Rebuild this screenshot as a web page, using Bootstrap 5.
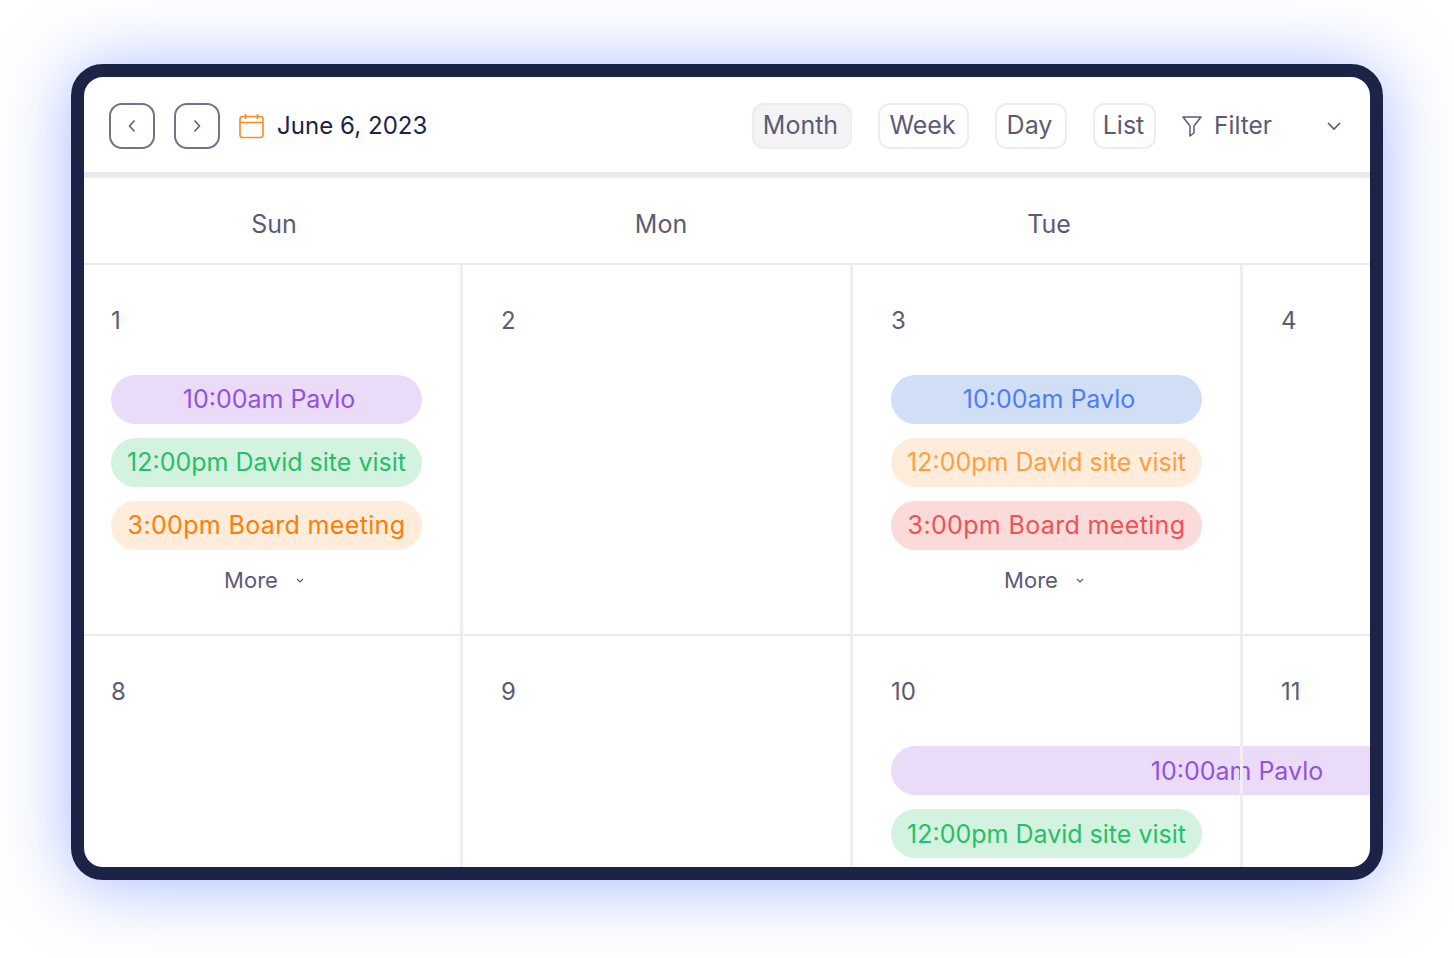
<!DOCTYPE html>
<html lang="en">
<head>
  <meta charset="UTF-8" />
  <title>Calendar</title>
  <link href="https://cdn.jsdelivr.net/npm/bootstrap@5.3.0/dist/css/bootstrap.min.css" rel="stylesheet" />
  <style>
    body {
      background: #fff;
      font-family: Inter, "Noto Sans", sans-serif;
      color: #5c5a75;
      height: 958px;
      overflow: hidden;
    }
    .frame {
      width: 1312px;
      height: 816px;
      margin: 64px 0 0 71px;
      border: 13px solid #1b2347;
      border-radius: 32px;
      background: #fff;
      overflow: hidden;
      box-shadow: 0 4px 70px rgba(75, 115, 255, .5);
    }
    .topbar {
      height: 101px;
      padding: 26px 29px 0 25px;
      border-bottom: 6px solid #e9e9f0;
    }
    .nav-square {
      width: 46px;
      height: 46px;
      border: 2px solid #74728a;
      border-radius: 13px;
      background: #fff;
    }
    .nav-next { margin-left: 19px; }
    .date-box { height: 46px; margin-left: 19px; }
    .date-label { font-size: 24px; color: #1b2347; letter-spacing: .05px; margin-left: 13px; }
    .view-btn {
      height: 46px;
      border: 2px solid #ececf2;
      border-radius: 12px;
      background: #fff;
      color: #5c5a75;
      font-size: 25px;
      padding: 0 0 2px;
      line-height: 1;
      margin-right: 26px;
    }
    .view-btn.on { background: #f4f4f6; }
    .w-month { width: 100px; padding-right: 3px; }
    .w-week { width: 91px; padding-right: 2px; }
    .w-day { width: 72px; padding-right: 3px; }
    .w-list { width: 63px; padding-right: 2px; }
    .filter-label { font-size: 24.5px; margin-left: 12px; width: 113px; padding-bottom: 2px; }
    .head-row {
      display: grid;
      grid-template-columns: 380px 394px 382px 1fr;
      height: 87px;
      padding-top: 8px;
      border-bottom: 2px solid #ebebf1;
      font-size: 25px;
    }
    .cal-row {
      display: grid;
      grid-template-columns: 376px 390px 390px 1fr;
      border-bottom: 2px solid #ebebf1;
    }
    .row-one { height: 371px; }
    .row-two { height: 231px; border-bottom: 0; }
    .day-cell {
      border-left: 3px solid #eeeef4;
      padding: 41px 0 0 38px;
      position: relative;
      z-index: 0;
    }
    .day-cell.first { border-left: 0; padding-left: 27px; }
    .day-cell.over { z-index: 2; }
    .day-num { font-size: 24px; line-height: 30px; height: 30px; margin-bottom: 39px; }
    .ev {
      width: 311px;
      height: 49px;
      line-height: 49px;
      border-radius: 25px;
      font-size: 25px;
      text-align: center;
      white-space: nowrap;
      margin-bottom: 14px;
    }
    .row-two .ev { line-height: 50px; }
    .ev.wide { width: 692px; }
    .ev-lead { padding-left: 5px; }
    .ev-long { letter-spacing: .35px; }
    .ev-purple { background: #eadcf9; color: #9550e0; }
    .ev-blue { background: #d0dff5; color: #4f7cf7; }
    .ev-green { background: #d3f3e0; color: #25c067; }
    .ev-orange { background: #ffecda; color: #ff7d05; }
    .ev-peach { background: #ffecda; color: #ff9f43; }
    .ev-red { background: #fbdada; color: #ee5253; }
    .more-line { width: 310px; font-size: 22px; margin-top: 1px; gap: 18px; padding-right: 4px; }
  </style>
</head>
<body>
  <div class="frame">
    <div class="topbar d-flex align-items-start">
      <button class="nav-square d-flex align-items-center justify-content-center p-0">
        <svg width="10" height="14" viewBox="0 0 10 14" fill="none" stroke="#5c5a75" stroke-width="1.5"><path d="M7.5 1.5 2.5 7l5 5.5"/></svg>
      </button>
      <button class="nav-square nav-next d-flex align-items-center justify-content-center p-0">
        <svg width="10" height="14" viewBox="0 0 10 14" fill="none" stroke="#5c5a75" stroke-width="1.5"><path d="M2.5 1.5 7.5 7l-5 5.5"/></svg>
      </button>
      <div class="date-box d-flex align-items-center">
        <svg width="25" height="26" viewBox="0 0 25 26" fill="none" stroke="#ff8a1f" stroke-width="1.6"><rect x="1" y="3.5" width="23" height="21" rx="2.5"/><path d="M1 9.5h23M6.5 1v5M18.5 1v5"/></svg>
        <span class="date-label">June 6, 2023</span>
      </div>
      <div class="d-flex align-items-center ms-auto">
        <button class="view-btn w-month on">Month</button>
        <button class="view-btn w-week">Week</button>
        <button class="view-btn w-day">Day</button>
        <button class="view-btn w-list">List</button>
        <svg width="20" height="22" viewBox="0 0 20 22" fill="none" stroke="#5c5a75" stroke-width="1.5" stroke-linejoin="round"><path d="M1 2h18l-7 9v7l-4 3V11z"/></svg>
        <span class="filter-label">Filter</span>
        <svg width="14" height="10" viewBox="0 0 14 10" fill="none" stroke="#5c5a75" stroke-width="1.7"><path d="M1 2l6 6 6-6"/></svg>
      </div>
    </div>
    <div class="head-row text-center align-items-center">
      <div>Sun</div><div>Mon</div><div>Tue</div><div></div>
    </div>
    <div class="cal-row row-one">
      <div class="day-cell first">
        <div class="day-num">1</div>
        <div class="ev ev-lead ev-purple">10:00am Pavlo</div>
        <div class="ev ev-green">12:00pm David site visit</div>
        <div class="ev ev-long ev-orange">3:00pm Board meeting</div>
        <div class="more-line d-flex align-items-center justify-content-center">More
          <svg width="8" height="6" viewBox="0 0 8 6" fill="none" stroke="#5c5a75" stroke-width="1.2"><path d="M1 1l3 3 3-3"/></svg>
        </div>
      </div>
      <div class="day-cell"><div class="day-num">2</div></div>
      <div class="day-cell">
        <div class="day-num">3</div>
        <div class="ev ev-lead ev-blue">10:00am Pavlo</div>
        <div class="ev ev-peach">12:00pm David site visit</div>
        <div class="ev ev-long ev-red">3:00pm Board meeting</div>
        <div class="more-line d-flex align-items-center justify-content-center">More
          <svg width="8" height="6" viewBox="0 0 8 6" fill="none" stroke="#5c5a75" stroke-width="1.2"><path d="M1 1l3 3 3-3"/></svg>
        </div>
      </div>
      <div class="day-cell over"><div class="day-num">4</div></div>
    </div>
    <div class="cal-row row-two">
      <div class="day-cell first"><div class="day-num">8</div></div>
      <div class="day-cell"><div class="day-num">9</div></div>
      <div class="day-cell">
        <div class="day-num">10</div>
        <div class="ev wide ev-purple">10:00am Pavlo</div>
        <div class="ev ev-green">12:00pm David site visit</div>
      </div>
      <div class="day-cell over"><div class="day-num">11</div></div>
    </div>
  </div>
  <script src="https://cdn.jsdelivr.net/npm/bootstrap@5.3.0/dist/js/bootstrap.bundle.min.js"></script>
</body>
</html>
